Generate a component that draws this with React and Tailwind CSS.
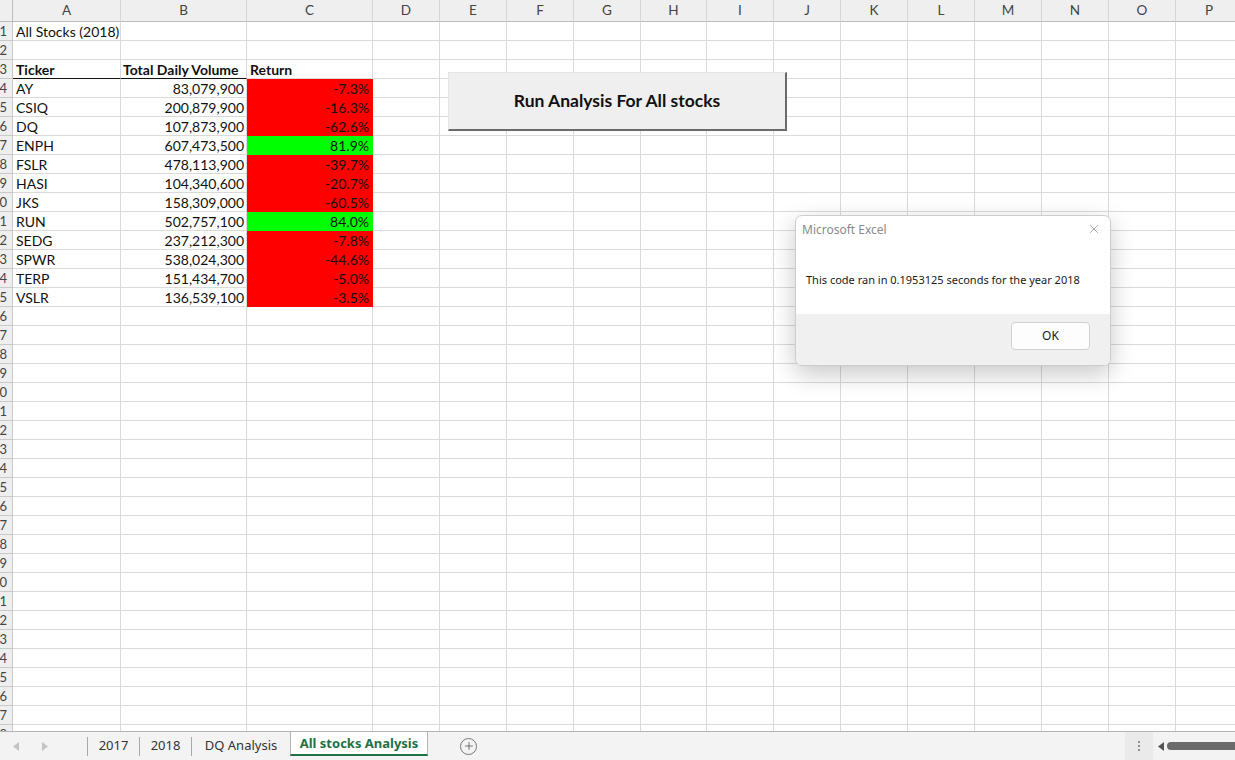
import { X, Plus } from 'lucide-react'

const cols = ['A', 'B', 'C', 'D', 'E', 'F', 'G', 'H', 'I', 'J', 'K', 'L', 'M', 'N', 'O', 'P']

const stocks = [
  ['AY', '83,079,900', '-7.3%', false],
  ['CSIQ', '200,879,900', '-16.3%', false],
  ['DQ', '107,873,900', '-62.6%', false],
  ['ENPH', '607,473,500', '81.9%', true],
  ['FSLR', '478,113,900', '-39.7%', false],
  ['HASI', '104,340,600', '-20.7%', false],
  ['JKS', '158,309,000', '-60.5%', false],
  ['RUN', '502,757,100', '84.0%', true],
  ['SEDG', '237,212,300', '-7.8%', false],
  ['SPWR', '538,024,300', '-44.6%', false],
  ['TERP', '151,434,700', '-5.0%', false],
  ['VSLR', '136,539,100', '-3.5%', false],
]

const gridCols = 'grid grid-cols-[13px_108px_126px_126px_67px_67px_67px_67px_66px_67px_67px_67px_67px_67px_67px_67px_67px]'
const cellFont = { fontFamily: 'Lato, "Liberation Sans", sans-serif' }

function Cell({ children, className = '', fill }) {
  const fillCls = fill === 'red' ? 'bg-[#ff0000] border-[#ff0000]' : fill === 'green' ? 'bg-[#00ff00] border-[#00ff00]' : 'border-[#dadada]'
  return (
    <div className={`h-[19px] border-r border-b ${fillCls} flex items-end whitespace-nowrap text-[14px] leading-[17px] text-[#111] ${className}`}>
      {children}
    </div>
  )
}

function Row({ n }) {
  let a = null, b = null, c = null, fill, bottomA = ''
  if (n === 1) a = <span className="pl-[3px]">All Stocks (2018)</span>
  if (n === 3) {
    a = <span className="pl-[3px] font-bold">Ticker</span>
    b = <span className="pl-[2px] font-bold">Total Daily Volume</span>
    c = <span className="pl-[3px] font-bold">Return</span>
    bottomA = '!border-b-[#111]'
  }
  const s = stocks[n - 4]
  if (s) {
    a = <span className="pl-[3px]">{s[0]}</span>
    b = <span className="ml-auto pr-[2px]">{s[1]}</span>
    c = <span className="ml-auto pr-[3px]">{s[2]}</span>
    fill = s[3] ? 'green' : 'red'
  }
  return (
    <div className={gridCols}>
      <div className="h-[19px] border-r border-b border-[#c9c9c9] bg-[#efefef] flex items-center justify-end overflow-hidden pr-[5px] pt-px text-[13px] text-[#444]" style={cellFont}>
        <span className="shrink-0">{n}</span>
      </div>
      <Cell className={`overflow-visible ${bottomA}`}>{a}</Cell>
      <Cell className={bottomA}>{b}</Cell>
      <Cell fill={fill}>{c}</Cell>
      {cols.slice(3).map((k) => <Cell key={k} />)}
    </div>
  )
}

function RunButton() {
  return (
    <div className="absolute left-[448px] top-[72px] w-[339px] h-[59px] bg-[#efefef] border-l border-t border-[#e4e4e4] border-r-2 border-b-2 border-r-[#6a6a6a] border-b-[#6a6a6a] flex items-center justify-center">
      <span className="text-[17.5px] font-bold text-[#111]" style={cellFont}>Run Analysis For All stocks</span>
    </div>
  )
}

function MsgBox() {
  const ui = { fontFamily: '"Noto Sans", "Open Sans", sans-serif' }
  return (
    <div className="absolute left-[795px] top-[215px] w-[316px] h-[151px] rounded-[7px] border border-[#cdcdcd] bg-white shadow-[0_8px_24px_rgba(0,0,0,0.22)] overflow-hidden flex flex-col" style={ui}>
      <div className="flex items-start justify-between pl-[6px] pr-[9px] pt-[5px]">
        <span className="text-[12px] text-[#8a8a8a]">Microsoft Excel</span>
        <X size={14} strokeWidth={1} className="text-[#6a6a6a] mt-[1px]" />
      </div>
      <div className="flex-1 pl-[10px] pt-[27px]">
        <span className="text-[11px] text-[#1a1a1a]">This code ran in 0.1953125 seconds for the year 2018</span>
      </div>
      <div className="h-[51px] bg-[#f0f0f0] flex items-start justify-end pt-[8px] pr-[20px]">
        <div className="w-[79px] h-[28px] bg-[#fdfdfd] border border-[#d0d0d0] rounded-[4px] flex items-center justify-center text-[12px] text-[#1a1a1a]">OK</div>
      </div>
    </div>
  )
}

function Triangle({ dir, className }) {
  return (
    <svg width="6" height="9" viewBox="0 0 6 9" className={className}>
      {dir === 'left' ? <path d="M6 0 L0 4.5 L6 9 Z" fill="currentColor" /> : <path d="M0 0 L6 4.5 L0 9 Z" fill="currentColor" />}
    </svg>
  )
}

function Sep() {
  return <div className="w-px h-[19px] bg-[#a8a8a8] self-center" />
}

function TabBar() {
  const ui = { fontFamily: '"Noto Sans", "Open Sans", sans-serif' }
  return (
    <div className="h-[29px] bg-[#f3f3f3] border-t border-[#b4b4b4] flex items-stretch text-[13px] text-[#333]" style={ui}>
      <div className="w-[87px] flex items-center">
        <Triangle dir="left" className="ml-[13px] text-[#c4c4c4]" />
        <Triangle dir="right" className="ml-[23px] text-[#c4c4c4]" />
      </div>
      <Sep />
      <div className="w-[51px] flex items-center justify-center">2017</div>
      <Sep />
      <div className="w-[51px] flex items-center justify-center">2018</div>
      <Sep />
      <div className="w-[98px] flex items-center justify-center">DQ Analysis</div>
      <div className="w-[138px] h-[25px] -mt-px bg-white border-l border-r border-t border-[#b4b4b4] border-b-2 border-b-[#1e7145] flex items-center justify-center pt-[2px] font-bold text-[13px] text-[#1e7145]">All stocks Analysis</div>
      <div className="ml-[32px] flex items-center">
        <div className="w-[17px] h-[17px] rounded-full border border-[#777] flex items-center justify-center text-[#555]">
          <Plus size={12} strokeWidth={1.6} />
        </div>
      </div>
      <div className="ml-auto w-[28px] bg-[#eaeaea] flex flex-col items-center justify-center gap-[2px]">
        <span className="w-[2px] h-[2px] bg-[#909090]" />
        <span className="w-[2px] h-[2px] bg-[#909090]" />
        <span className="w-[2px] h-[2px] bg-[#909090]" />
      </div>
      <div className="w-[82px] flex items-center">
        <Triangle dir="left" className="ml-[5px] text-[#555]" />
        <div className="ml-[3px] flex-1 h-[8px] rounded-l-full bg-[#6b6b6b]" />
      </div>
    </div>
  )
}

export default function App() {
  return (
    <div className="w-[1235px] h-[760px] overflow-hidden bg-white flex flex-col" style={cellFont}>
      <div className="relative flex-1 overflow-hidden">
        <div className={gridCols}>
          <div className="h-[22px] bg-[#efefef] border-r border-b border-[#bdbdbd]" />
          {cols.map((k) => (
            <div key={k} className="h-[22px] bg-[#efefef] border-r border-b border-r-[#d6d6d6] border-b-[#bdbdbd] flex items-center justify-center text-[13.5px] text-[#444]">{k}</div>
          ))}
        </div>
        {Array.from({ length: 38 }, (_, i) => <Row key={i} n={i + 1} />)}
        <RunButton />
        <MsgBox />
      </div>
      <TabBar />
    </div>
  )
}
